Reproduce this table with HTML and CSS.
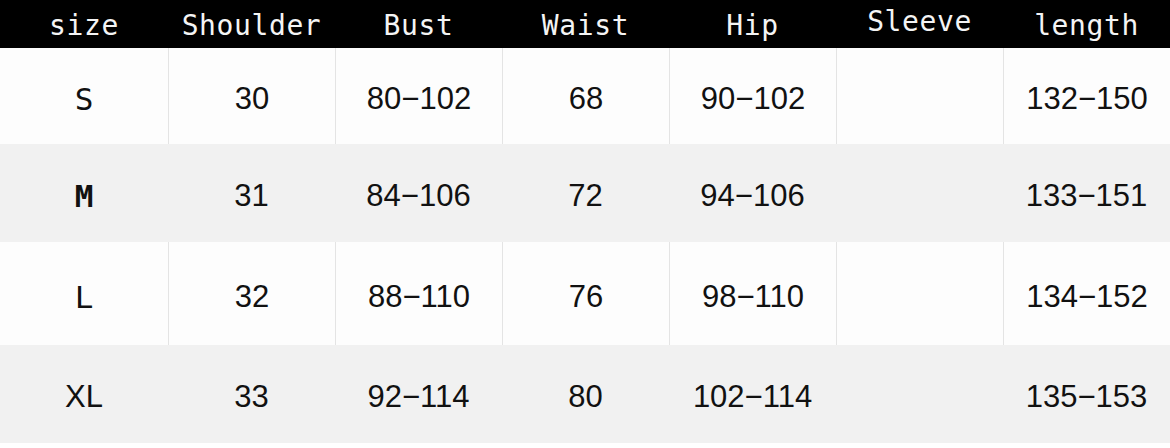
FILE: index.html
```html
<!DOCTYPE html>
<html>
<head>
<meta charset="utf-8">
<link rel="stylesheet" href="styles.css">
</head>
<body>
<div class="chart">
  <div class="row head">
    <div class="cell">size</div>
    <div class="cell">Shoulder</div>
    <div class="cell">Bust</div>
    <div class="cell">Waist</div>
    <div class="cell">Hip</div>
    <div class="cell raised">Sleeve</div>
    <div class="cell">length</div>
  </div>
  <div class="row light r-s">
    <div class="cell mono">S</div>
    <div class="cell">30</div>
    <div class="cell">80−102</div>
    <div class="cell">68</div>
    <div class="cell">90−102</div>
    <div class="cell"></div>
    <div class="cell">132−150</div>
  </div>
  <div class="row grey r-m">
    <div class="cell mono bold">M</div>
    <div class="cell">31</div>
    <div class="cell">84−106</div>
    <div class="cell">72</div>
    <div class="cell">94−106</div>
    <div class="cell"></div>
    <div class="cell">133−151</div>
  </div>
  <div class="row light r-l">
    <div class="cell mono">L</div>
    <div class="cell">32</div>
    <div class="cell">88−110</div>
    <div class="cell">76</div>
    <div class="cell">98−110</div>
    <div class="cell"></div>
    <div class="cell">134−152</div>
  </div>
  <div class="row grey r-xl">
    <div class="cell">XL</div>
    <div class="cell">33</div>
    <div class="cell">92−114</div>
    <div class="cell">80</div>
    <div class="cell">102−114</div>
    <div class="cell"></div>
    <div class="cell">135−153</div>
  </div>
</div>
</body>
</html>
```

FILE: styles.css
```css
html, body {
  margin: 0;
  padding: 0;
  background: #ffffff;
}
body {
  width: 1170px;
  height: 448px;
  overflow: hidden;
  font-family: "Liberation Sans", Arial, sans-serif;
  color: #111111;
}
.chart {
  display: flex;
  flex-direction: column;
}
.row {
  display: grid;
  grid-template-columns: 168px repeat(6, 1fr);
}
.cell {
  display: flex;
  align-items: center;
  justify-content: center;
  font-size: 31px;
  padding-top: 6px;
  box-sizing: border-box;
}
.head {
  height: 48px;
  background: #000000;
  color: #f4f4f4;
}
.head .cell {
  font-family: "DejaVu Sans Mono", "Liberation Mono", monospace;
  font-size: 28px;
  letter-spacing: 0.6px;
  padding-top: 2px;
  padding-bottom: 0;
}
.head .raised {
  padding-top: 0;
  padding-bottom: 6px;
}
.light {
  background: #fdfdfd;
}
.light .cell + .cell {
  border-left: 1px solid #e4e4e4;
}
.grey {
  background: #f1f1f1;
}
.r-s { height: 96px; }
.r-m { height: 98px; }
.r-l { height: 103px; }
.r-xl { height: 98px; }
.mono {
  font-family: "DejaVu Sans Mono", "Liberation Mono", monospace;
  font-size: 31px;
}
.bold {
  font-weight: bold;
}
```
